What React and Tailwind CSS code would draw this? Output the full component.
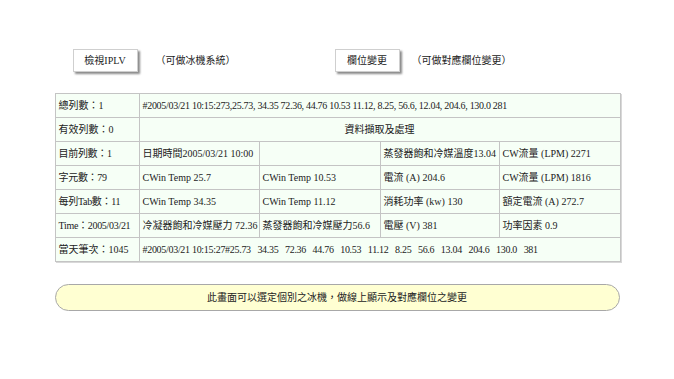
export default function App() {
  const cell = "border border-[#c4c4c4] px-[3px] h-[24px] text-left align-middle whitespace-nowrap overflow-hidden";
  const rows = [
    ["目前列數：1", "日期時間2005/03/21 10:00", "", "蒸發器飽和冷媒溫度13.04", "CW流量 (LPM) 2271"],
    ["字元數：79", "CWin Temp 25.7", "CWin Temp 10.53", "電流 (A) 204.6", "CW流量 (LPM) 1816"],
    ["每列Tab數：11", "CWin Temp 34.35", "CWin Temp 11.12", "消耗功率 (kw) 130", "額定電流 (A) 272.7"],
    ["Time：2005/03/21", "冷凝器飽和冷媒壓力 72.36", "蒸發器飽和冷媒壓力56.6", "電壓 (V) 381", "功率因素 0.9"],
  ];

  return (
    <div
      className="min-h-[379px] bg-white text-[10px] text-[#222]"
      style={{ fontFamily: '"Liberation Serif", "Noto Sans CJK TC", serif' }}
    >
      <div className="mx-auto w-[565px] pt-[49px]">
        {/* Buttons */}
        <div className="flex items-center pl-[18px]">
          <div className="flex w-[262px] items-center">
            <button className="h-[23px] w-[65px] border border-[#cfcfcf] bg-white shadow-[2px_2px_2px_#8a8a8a]">
              檢視IPLV
            </button>
            <span className="ml-[18px]">（可做冰機系統）</span>
          </div>
          <div className="flex items-center">
            <button className="h-[23px] w-[65px] border border-[#cfcfcf] bg-white shadow-[2px_2px_2px_#8a8a8a]">
              欄位變更
            </button>
            <span className="ml-[12px]">（可做對應欄位變更）</span>
          </div>
        </div>

        {/* Data table */}
        <table className="mt-[21px] w-[565px] table-fixed border-collapse bg-[#f6fff6] shadow-[1px_1px_0_#d8d8d8]">
          <colgroup>
            <col className="w-[84px]" />
            <col className="w-[120px]" />
            <col className="w-[121px]" />
            <col className="w-[119px]" />
            <col className="w-[121px]" />
          </colgroup>
          <tbody>
            <tr>
              <td className={cell}>總列數：1</td>
              <td className={`${cell} tracking-[-0.3px]`} colSpan={4}>
                #2005/03/21 10:15:273,25.73, 34.35 72.36, 44.76 10.53 11.12, 8.25, 56.6, 12.04, 204.6, 130.0 281
              </td>
            </tr>
            <tr>
              <td className={cell}>有效列數：0</td>
              <td className={cell} colSpan={4} style={{ textAlign: "center" }}>
                資料擷取及處理
              </td>
            </tr>
            {rows.map((r, i) => (
              <tr key={i}>
                {r.map((c, j) => (
                  <td key={j} className={`${cell} ${j === 0 ? "tracking-[-0.3px]" : ""}`}>
                    {c}
                  </td>
                ))}
              </tr>
            ))}
            <tr>
              <td className={cell}>當天筆次：1045</td>
              <td className={`${cell} whitespace-pre tracking-[-0.3px]`} colSpan={4}>
                {"#2005/03/21 10:15:27#25.73   34.35   72.36   44.76   10.53   11.12   8.25   56.6   13.04   204.6   130.0   381"}
              </td>
            </tr>
          </tbody>
        </table>

        {/* Note */}
        <div className="mt-[22px] flex h-[27px] items-center justify-center rounded-full border border-[#a8a8a8] bg-[#ffffd2]">
          此畫面可以選定個別之冰機，做線上顯示及對應欄位之變更
        </div>
      </div>
    </div>
  );
}
